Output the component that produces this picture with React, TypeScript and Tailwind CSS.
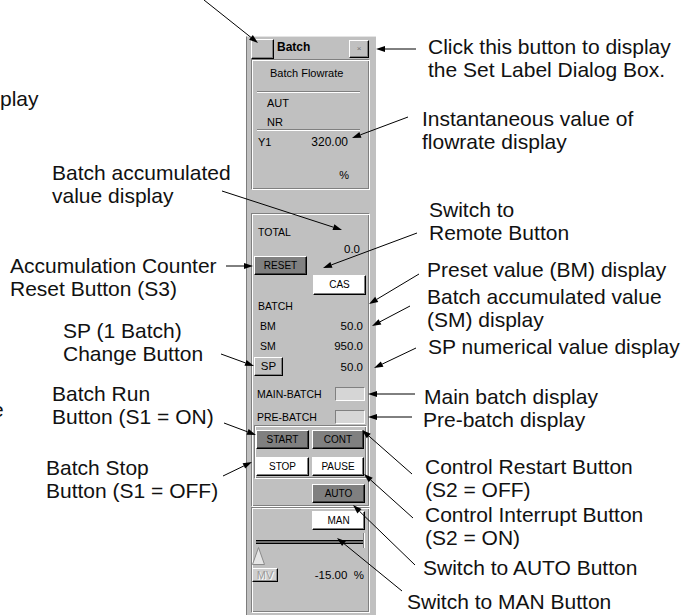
import React from "react";

type Arrow = [number, number, number, number];
const arrows: Arrow[] = [
  [204, 0, 258, 43],
  [222, 191, 342, 230],
  [226, 266, 253, 266],
  [221, 354, 254, 366],
  [224, 423, 256, 435],
  [223, 476, 252, 462],
  [416, 49, 376, 49],
  [408, 117, 352, 138],
  [417, 233, 323, 268],
  [419, 274, 369, 304],
  [410, 306, 372, 326],
  [416, 348, 374, 368],
  [415, 394, 368, 394],
  [412, 417, 368, 417],
  [412, 474, 362, 430],
  [413, 518, 364, 474],
  [415, 565, 353, 505],
  [402, 591, 337, 538],
];

function Arrows() {
  return (
    <svg className="absolute left-0 top-0 pointer-events-none" width={695} height={615}>
      {arrows.map(([x1, y1, x2, y2], i) => {
        const dx = x2 - x1;
        const dy = y2 - y1;
        const len = Math.hypot(dx, dy);
        const ux = dx / len;
        const uy = dy / len;
        const L = 9;
        const W = 3;
        const bx = x2 - ux * L;
        const by = y2 - uy * L;
        const pts = `${x2},${y2} ${bx - uy * W},${by + ux * W} ${bx + uy * W},${by - ux * W}`;
        return (
          <g key={i}>
            <line x1={x1} y1={y1} x2={bx} y2={by} stroke="#000" strokeWidth={1} />
            <polygon points={pts} fill="#000" />
          </g>
        );
      })}
    </svg>
  );
}

const btnBase =
  "flex items-center justify-center leading-none border border-t-white border-l-white border-r-black border-b-black";
const grayBtn = `${btnBase} bg-[#c0c0c0] shadow-[inset_-1px_-1px_0_#808080]`;
const darkBtn = `${btnBase} bg-[#808080] shadow-[inset_-1px_-1px_0_#404040]`;
const whiteBtn = `${btnBase} bg-white shadow-[inset_-1px_-1px_0_#808080]`;
const etched =
  "border border-t-[#808080] border-l-[#808080] border-r-white border-b-white shadow-[inset_1px_1px_0_#fff,inset_-1px_-1px_0_#808080]";
const sunken =
  "border border-t-[#808080] border-l-[#808080] border-r-white border-b-white bg-[#d6d6d6]";
const sep = "h-[2px] border-t border-t-[#808080] border-b border-b-white";

function Panel() {
  return (
    <div className="w-[130px] shrink-0 mt-[36px] h-[600px] bg-[#c0c0c0] border-l border-l-[#7c7c7c] border-t border-t-[#e4e4e4] pl-[4px] pr-[6px] pt-[2px] flex flex-col text-[10.5px] leading-[14px] text-black">
      {/* header */}
      <div className="flex h-[20px] items-start">
        <div className={`w-[23px] h-[20px] ${grayBtn}`} />
        <span className="ml-[3px] text-[12px] leading-[16px] font-bold">Batch</span>
        <div className={`ml-auto mr-[1px] mt-[1px] w-[20px] h-[18px] ${grayBtn} text-[8px] text-[#707070]`}>×</div>
      </div>

      {/* box 1 */}
      <div className={`h-[131px] ${etched} flex flex-col`}>
        <div className="mt-[6px] pl-[18px] text-[11px]">Batch Flowrate</div>
        <div className={`mt-[11px] ml-[5px] mr-[9px] ${sep}`} />
        <div className="mt-[3px] pl-[15px] text-[11px]">AUT</div>
        <div className="mt-[5px] pl-[15px] text-[11px]">NR</div>
        <div className={`ml-[5px] mr-[9px] ${sep}`} />
        <div className="mt-[4px] flex justify-between pl-[6px] pr-[21px]">
          <span className="text-[11px]">Y1</span>
          <span className="text-[12px]">320.00</span>
        </div>
        <div className="mt-[19px] text-right pr-[20px] text-[11px]">%</div>
      </div>

      {/* box 2 */}
      <div className={`mt-[23px] h-[294px] ${etched} flex flex-col`}>
        <div className="mt-[11px] pl-[6px]">TOTAL</div>
        <div className="mt-[3px] text-right pr-[9px] text-[11.5px]">0.0</div>
        <div className={`ml-[2px] w-[53px] h-[19px] ${darkBtn} text-[10px]`}>RESET</div>
        <div className={`self-end mr-[3px] w-[53px] h-[20px] ${whiteBtn} text-[10px]`}>CAS</div>
        <div className="mt-[4px] pl-[6px]">BATCH</div>
        <div className="mt-[3px] h-[20px] flex items-center justify-between pl-[8px] pr-[6px]">
          <span>BM</span>
          <span className="text-[11.5px]">50.0</span>
        </div>
        <div className="h-[20px] flex items-center justify-between pl-[8px] pr-[6px]">
          <span>SM</span>
          <span className="text-[11.5px]">950.0</span>
        </div>
        <div className="mt-[1px] h-[19px] flex items-center justify-between pl-[2px] pr-[6px]">
          <div className={`w-[29px] h-[19px] ${grayBtn} text-[11.5px]`}>SP</div>
          <span className="text-[11.5px]">50.0</span>
        </div>
        <div className="mt-[11px] h-[14px] flex items-center pl-[5px] pr-[4px]">
          <span>MAIN-BATCH</span>
          <div className={`ml-auto w-[30px] h-[14px] ${sunken}`} />
        </div>
        <div className="mt-[9px] h-[14px] flex items-center pl-[5px] pr-[4px]">
          <span>PRE-BATCH</span>
          <div className={`ml-auto w-[30px] h-[14px] ${sunken}`} />
        </div>
        <div className={`mt-[1px] mx-[2px] h-[54px] ${etched} flex flex-col gap-[8px] pt-[4px] pl-[1px]`}>
          <div className="flex gap-[3px]">
            <div className={`w-[53px] h-[19px] ${darkBtn} text-[10px]`}>START</div>
            <div className={`w-[52px] h-[19px] ${darkBtn} text-[10px]`}>CONT</div>
          </div>
          <div className="flex gap-[3px]">
            <div className={`w-[53px] h-[19px] ${whiteBtn} text-[10px]`}>STOP</div>
            <div className={`w-[52px] h-[19px] ${whiteBtn} text-[10px]`}>PAUSE</div>
          </div>
        </div>
        <div className={`mt-[5px] self-end mr-[4px] w-[53px] h-[19px] ${darkBtn} text-[10px]`}>AUTO</div>
      </div>

      {/* box 3 */}
      <div className={`h-[106px] ${etched} flex flex-col`}>
        <div className={`mt-[3px] self-end mr-[4px] w-[53px] h-[19px] ${whiteBtn} text-[10px]`}>MAN</div>
        <div className="mt-[3px] h-[15px] flex items-end pl-[4px] pr-[4px]">
          <div className="flex-1 h-[4px] mb-[4px] border-t border-t-black border-b border-b-black bg-[#707070]" />
          <div className="w-[2px] h-[15px] border-l border-l-[#808080] border-r border-r-white" />
        </div>
        <div className="-mt-[1px] h-[18px]">
          <svg width="13" height="18" viewBox="0 0 13 18">
            <polygon points="6.5,0.5 0.5,17.5 12.5,17.5" fill="#e6e6e6" stroke="#8a8a8a" strokeWidth="1" />
          </svg>
        </div>
        <div className="mt-[3px] h-[14px] flex items-center pr-[5px]">
          <div className={`w-[26px] h-[14px] ${btnBase} bg-[#cfcfcf] shadow-[inset_-1px_-1px_0_#909090] text-[11px] text-[#9a9a9a] [text-shadow:1px_1px_0_#fff]`}>MV</div>
          <span className="ml-auto text-[11.5px]">-15.00&nbsp;&nbsp;%</span>
        </div>
      </div>
    </div>
  );
}

const note = "absolute whitespace-nowrap text-[21px] leading-[23px] text-[#111]";

export default function App() {
  return (
    <div className="relative w-[695px] h-[615px] overflow-hidden bg-white font-['Liberation_Sans',Arial,Helvetica,sans-serif]">
      <div className="flex h-full">
        <div className="relative w-[246px] shrink-0">
          <div className={`${note} left-[0px] top-[87px]`}>play</div>
          <div className={`${note} left-[-8px] top-[398px]`}>e</div>
          <div className={`${note} left-[52px] top-[161px]`}>
            Batch accumulated
            <br />
            value display
          </div>
          <div className={`${note} left-[10px] top-[254px]`}>
            Accumulation Counter
            <br />
            Reset Button (S3)
          </div>
          <div className={`${note} left-[63px] top-[319px]`}>
            SP (1 Batch)
            <br />
            Change Button
          </div>
          <div className={`${note} left-[52px] top-[382px]`}>
            Batch Run
            <br />
            Button (S1 = ON)
          </div>
          <div className={`${note} left-[46px] top-[456px]`}>
            Batch Stop
            <br />
            Button (S1 = OFF)
          </div>
        </div>
        <Panel />
        <div className="relative flex-1">
          <div className={`${note} left-[52px] top-[35px]`}>
            Click this button to display
            <br />
            the Set Label Dialog Box.
          </div>
          <div className={`${note} left-[46px] top-[107px]`}>
            Instantaneous value of
            <br />
            flowrate display
          </div>
          <div className={`${note} left-[53px] top-[198px]`}>
            Switch to
            <br />
            Remote Button
          </div>
          <div className={`${note} left-[51px] top-[258px]`}>Preset value (BM) display</div>
          <div className={`${note} left-[51px] top-[285px]`}>
            Batch accumulated value
            <br />
            (SM) display
          </div>
          <div className={`${note} left-[52px] top-[335px]`}>SP numerical value display</div>
          <div className={`${note} left-[48px] top-[385px]`}>Main batch display</div>
          <div className={`${note} left-[47px] top-[408px]`}>Pre-batch display</div>
          <div className={`${note} left-[49px] top-[455px]`}>
            Control Restart Button
            <br />
            (S2 = OFF)
          </div>
          <div className={`${note} left-[49px] top-[503px]`}>
            Control Interrupt Button
            <br />
            (S2 = ON)
          </div>
          <div className={`${note} left-[47px] top-[556px]`}>Switch to AUTO Button</div>
          <div className={`${note} left-[31px] top-[590px]`}>Switch to MAN Button</div>
        </div>
      </div>
      <Arrows />
    </div>
  );
}
